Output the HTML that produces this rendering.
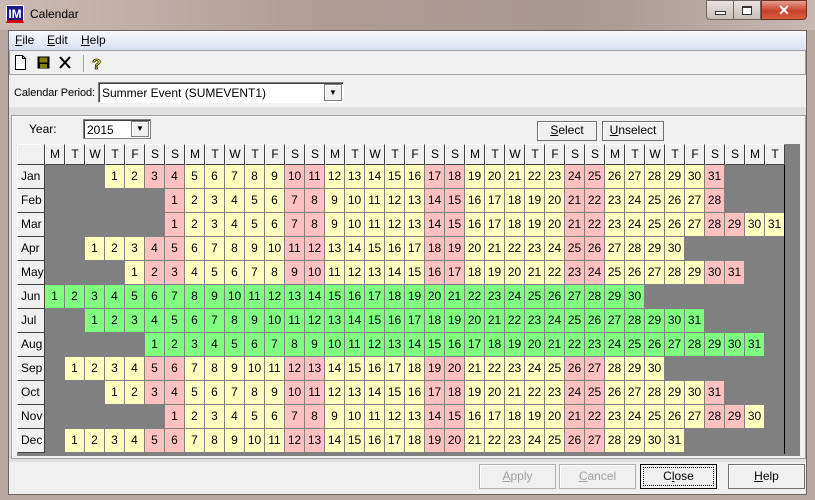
<!DOCTYPE html>
<html><head><style>
*{box-sizing:border-box;margin:0;padding:0}
body{width:815px;height:500px;overflow:hidden;font:12px "Liberation Sans",sans-serif;background:#b8a8a2;position:relative}
.abs{position:absolute}
#title{left:0;top:0;width:815px;height:30px;background:linear-gradient(90deg,#cbbab3,#b09c95 40%,#a89690 70%,#c6b8b3);}
#client{left:8px;top:30px;width:799px;height:465px;background:#f0f0f0;border:1px solid #6d6360}
#menu{left:9px;top:31px;width:797px;height:19px;background:linear-gradient(#f6f8fc,#d8e0f0);}
#menu span{position:absolute;top:2px;font-size:12px}
#tool{left:9px;top:50px;width:797px;height:25px;background:#f0f0f0;border:1px solid #a0a0a0}
.btn{position:absolute;background:#f0f0f0;border:1px solid #707070;box-shadow:inset 1px 1px #fff;text-align:center;line-height:22px;font-size:12px}
.grid{position:absolute;left:17px;top:144px;width:783px;height:312px;background:#808080}
.r{display:flex;height:24px}
.h{display:flex;height:21px}
.h span{width:20px;height:21px;background:#f0f0f0;border-right:1px solid #404040;border-bottom:1px solid #404040;border-top:1px solid #fff;border-left:1px solid #fff;text-align:center;line-height:19px;font-size:12px}
.h span:first-child{width:28px}
.r>*{width:20px;height:24px;text-align:center;line-height:23px;font-style:normal;text-decoration:none;font-weight:normal;font-size:12px}
.r i{background:#ffffc0;border-right:1px solid #808080;border-bottom:1px solid #808080}
.r u{background:#ffc0c0;border-right:1px solid #808080;border-bottom:1px solid #808080}
.r b{background:#80ff80;border-right:1px solid #808080;border-bottom:1px solid #808080}
.r s{background:#808080}
.r em{width:28px;background:#f0f0f0;border-right:1px solid #404040;border-bottom:1px solid #404040;border-left:1px solid #fff;text-align:left;padding-left:3px}
.dd{position:absolute;right:1px;top:1px;width:18px;height:17px;background:#f0f0f0;border:1px solid #808080;box-shadow:inset 1px 1px #fff;font-size:8px;text-align:center;line-height:15px}
</style></head><body>
<div class="abs" id="title"></div>
<div class="abs" style="left:6px;top:5px;width:18px;height:18px;background:#1a1a8a;border:1px solid #fff;color:#fff;font:bold 12px 'Liberation Sans';line-height:16px;text-align:center;border-bottom:3px solid #c00">IM</div>
<div class="abs" style="left:30px;top:7px;font-size:12px;color:#000">Calendar</div>
<div class="abs" style="left:706px;top:0;width:28px;height:20px;background:linear-gradient(#e8e2e0,#c9bdb8);border:1px solid #6e6460;border-radius:0 0 0 4px"><div style="margin:10px 8px 0;width:11px;height:4px;border:1px solid #333;background:#fff"></div></div>
<div class="abs" style="left:734px;top:0;width:27px;height:20px;background:linear-gradient(#e8e2e0,#c9bdb8);border:1px solid #6e6460;border-left:none"><div style="margin:5px 8px 0;width:10px;height:9px;border:1px solid #333;border-top-width:2px;background:#fff"></div></div>
<div class="abs" style="left:761px;top:0;width:46px;height:20px;background:linear-gradient(#e8a090,#c8402a 55%,#d86040);border:1px solid #6e3020;border-radius:0 0 4px 0;color:#fff;font:bold 14px 'Liberation Sans';text-align:center;line-height:18px">✕</div>
<div class="abs" id="client"></div>
<div class="abs" id="menu"><span style="left:6px"><u>F</u>ile</span><span style="left:38px"><u>E</u>dit</span><span style="left:72px"><u>H</u>elp</span></div>
<div class="abs" id="tool"></div>
<svg class="abs" style="left:12px;top:53px" width="100" height="20">
<path d="M3.5 2.5h7l3 3v11h-10z M10.5 2.5v3h3" fill="#fff" stroke="#000"/>
<rect x="25.5" y="3.5" width="12" height="12" fill="#000"/><rect x="27.5" y="4.5" width="8" height="5" fill="#808000"/><rect x="28" y="11" width="7" height="4" fill="#808000"/>
<path d="M48 4l10 11M58 4L48 15" stroke="#000" stroke-width="2"/>
<line x1="71.5" y1="2" x2="71.5" y2="19" stroke="#a0a0a0"/>
<text x="80" y="16" font-size="15" font-weight="bold" fill="#ff0" stroke="#000" stroke-width=".7" font-family="Liberation Sans">?</text>
</svg>
<div class="abs" style="left:9px;top:76px;width:797px;height:35px;background:#f0f0f0"></div>
<div class="abs" style="left:14px;top:87px;font-size:11px;letter-spacing:-0.1px">Calendar Period:</div>
<div class="abs" style="left:98px;top:82px;width:246px;height:21px;background:#fff;border:1px solid #808080;border-right-color:#fff;border-bottom-color:#fff;box-shadow:inset 1px 1px #404040;padding:3px 3px">Summer Event (SUMEVENT1)<div class="dd">▼</div></div>
<div class="abs" style="left:9px;top:107px;width:797px;height:355px;background:#e0e0e0"></div>
<div class="abs" style="left:11px;top:115px;width:795px;height:344px;background:#f0f0f0;border:1px solid #a0a0a0;box-shadow:inset 1px 1px #fff"></div>
<div class="abs" style="left:29px;top:122px">Year:</div>
<div class="abs" style="left:83px;top:119px;width:68px;height:20px;background:#fff;border:1px solid #808080;box-shadow:inset 1px 1px #404040;padding:3px 3px">2015<div class="dd" style="height:16px;line-height:14px">▼</div></div>
<div class="btn" style="left:537px;top:121px;width:60px;height:20px;line-height:17px"><u>S</u>elect</div>
<div class="btn" style="left:602px;top:121px;width:62px;height:20px;line-height:17px"><u>U</u>nselect</div>
<div class="grid">
<div class="h"><span></span><span>M</span><span>T</span><span>W</span><span>T</span><span>F</span><span>S</span><span>S</span><span>M</span><span>T</span><span>W</span><span>T</span><span>F</span><span>S</span><span>S</span><span>M</span><span>T</span><span>W</span><span>T</span><span>F</span><span>S</span><span>S</span><span>M</span><span>T</span><span>W</span><span>T</span><span>F</span><span>S</span><span>S</span><span>M</span><span>T</span><span>W</span><span>T</span><span>F</span><span>S</span><span>S</span><span>M</span><span>T</span></div>
<div class="r"><em>Jan</em><s></s><s></s><s></s><i>1</i><i>2</i><u>3</u><u>4</u><i>5</i><i>6</i><i>7</i><i>8</i><i>9</i><u>10</u><u>11</u><i>12</i><i>13</i><i>14</i><i>15</i><i>16</i><u>17</u><u>18</u><i>19</i><i>20</i><i>21</i><i>22</i><i>23</i><u>24</u><u>25</u><i>26</i><i>27</i><i>28</i><i>29</i><i>30</i><u>31</u><s></s><s></s><s></s></div>
<div class="r"><em>Feb</em><s></s><s></s><s></s><s></s><s></s><s></s><u>1</u><i>2</i><i>3</i><i>4</i><i>5</i><i>6</i><u>7</u><u>8</u><i>9</i><i>10</i><i>11</i><i>12</i><i>13</i><u>14</u><u>15</u><i>16</i><i>17</i><i>18</i><i>19</i><i>20</i><u>21</u><u>22</u><i>23</i><i>24</i><i>25</i><i>26</i><i>27</i><u>28</u><s></s><s></s><s></s></div>
<div class="r"><em>Mar</em><s></s><s></s><s></s><s></s><s></s><s></s><u>1</u><i>2</i><i>3</i><i>4</i><i>5</i><i>6</i><u>7</u><u>8</u><i>9</i><i>10</i><i>11</i><i>12</i><i>13</i><u>14</u><u>15</u><i>16</i><i>17</i><i>18</i><i>19</i><i>20</i><u>21</u><u>22</u><i>23</i><i>24</i><i>25</i><i>26</i><i>27</i><u>28</u><u>29</u><i>30</i><i>31</i></div>
<div class="r"><em>Apr</em><s></s><s></s><i>1</i><i>2</i><i>3</i><u>4</u><u>5</u><i>6</i><i>7</i><i>8</i><i>9</i><i>10</i><u>11</u><u>12</u><i>13</i><i>14</i><i>15</i><i>16</i><i>17</i><u>18</u><u>19</u><i>20</i><i>21</i><i>22</i><i>23</i><i>24</i><u>25</u><u>26</u><i>27</i><i>28</i><i>29</i><i>30</i><s></s><s></s><s></s><s></s><s></s></div>
<div class="r"><em>May</em><s></s><s></s><s></s><s></s><i>1</i><u>2</u><u>3</u><i>4</i><i>5</i><i>6</i><i>7</i><i>8</i><u>9</u><u>10</u><i>11</i><i>12</i><i>13</i><i>14</i><i>15</i><u>16</u><u>17</u><i>18</i><i>19</i><i>20</i><i>21</i><i>22</i><u>23</u><u>24</u><i>25</i><i>26</i><i>27</i><i>28</i><i>29</i><u>30</u><u>31</u><s></s><s></s></div>
<div class="r"><em>Jun</em><b>1</b><b>2</b><b>3</b><b>4</b><b>5</b><b>6</b><b>7</b><b>8</b><b>9</b><b>10</b><b>11</b><b>12</b><b>13</b><b>14</b><b>15</b><b>16</b><b>17</b><b>18</b><b>19</b><b>20</b><b>21</b><b>22</b><b>23</b><b>24</b><b>25</b><b>26</b><b>27</b><b>28</b><b>29</b><b>30</b><s></s><s></s><s></s><s></s><s></s><s></s><s></s></div>
<div class="r"><em>Jul</em><s></s><s></s><b>1</b><b>2</b><b>3</b><b>4</b><b>5</b><b>6</b><b>7</b><b>8</b><b>9</b><b>10</b><b>11</b><b>12</b><b>13</b><b>14</b><b>15</b><b>16</b><b>17</b><b>18</b><b>19</b><b>20</b><b>21</b><b>22</b><b>23</b><b>24</b><b>25</b><b>26</b><b>27</b><b>28</b><b>29</b><b>30</b><b>31</b><s></s><s></s><s></s><s></s></div>
<div class="r"><em>Aug</em><s></s><s></s><s></s><s></s><s></s><b>1</b><b>2</b><b>3</b><b>4</b><b>5</b><b>6</b><b>7</b><b>8</b><b>9</b><b>10</b><b>11</b><b>12</b><b>13</b><b>14</b><b>15</b><b>16</b><b>17</b><b>18</b><b>19</b><b>20</b><b>21</b><b>22</b><b>23</b><b>24</b><b>25</b><b>26</b><b>27</b><b>28</b><b>29</b><b>30</b><b>31</b><s></s></div>
<div class="r"><em>Sep</em><s></s><i>1</i><i>2</i><i>3</i><i>4</i><u>5</u><u>6</u><i>7</i><i>8</i><i>9</i><i>10</i><i>11</i><u>12</u><u>13</u><i>14</i><i>15</i><i>16</i><i>17</i><i>18</i><u>19</u><u>20</u><i>21</i><i>22</i><i>23</i><i>24</i><i>25</i><u>26</u><u>27</u><i>28</i><i>29</i><i>30</i><s></s><s></s><s></s><s></s><s></s><s></s></div>
<div class="r"><em>Oct</em><s></s><s></s><s></s><i>1</i><i>2</i><u>3</u><u>4</u><i>5</i><i>6</i><i>7</i><i>8</i><i>9</i><u>10</u><u>11</u><i>12</i><i>13</i><i>14</i><i>15</i><i>16</i><u>17</u><u>18</u><i>19</i><i>20</i><i>21</i><i>22</i><i>23</i><u>24</u><u>25</u><i>26</i><i>27</i><i>28</i><i>29</i><i>30</i><u>31</u><s></s><s></s><s></s></div>
<div class="r"><em>Nov</em><s></s><s></s><s></s><s></s><s></s><s></s><u>1</u><i>2</i><i>3</i><i>4</i><i>5</i><i>6</i><u>7</u><u>8</u><i>9</i><i>10</i><i>11</i><i>12</i><i>13</i><u>14</u><u>15</u><i>16</i><i>17</i><i>18</i><i>19</i><i>20</i><u>21</u><u>22</u><i>23</i><i>24</i><i>25</i><i>26</i><i>27</i><u>28</u><u>29</u><i>30</i><s></s></div>
<div class="r"><em>Dec</em><s></s><i>1</i><i>2</i><i>3</i><i>4</i><u>5</u><u>6</u><i>7</i><i>8</i><i>9</i><i>10</i><i>11</i><u>12</u><u>13</u><i>14</i><i>15</i><i>16</i><i>17</i><i>18</i><u>19</u><u>20</u><i>21</i><i>22</i><i>23</i><i>24</i><i>25</i><u>26</u><u>27</u><i>28</i><i>29</i><i>30</i><i>31</i><s></s><s></s><s></s><s></s><s></s></div>
</div>
<div class="abs" style="left:784px;top:165px;width:1px;height:289px;background:#000"></div>
<div class="btn" style="left:479px;top:464px;width:77px;height:25px;color:#a0a0a0;border-color:#b0b0b0"><u>A</u>pply</div>
<div class="btn" style="left:559px;top:464px;width:77px;height:25px;color:#a0a0a0;border-color:#b0b0b0"><u>C</u>ancel</div>
<div class="btn" style="left:640px;top:464px;width:77px;height:25px;border:1px solid #000;outline:1px dotted #000;outline-offset:-4px">C<u>l</u>ose</div>
<div class="btn" style="left:728px;top:464px;width:77px;height:25px"><u>H</u>elp</div>
</body></html>
